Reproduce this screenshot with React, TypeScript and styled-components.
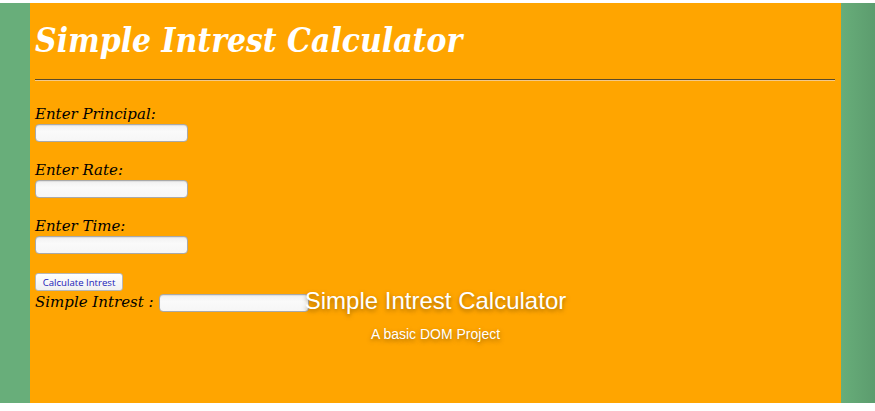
import React from "react";
import styled, { createGlobalStyle } from "styled-components";

const Global = createGlobalStyle`
  html, body { margin: 0; padding: 0; background: #ffffff; }
  body { padding-top: 3px; }
`;

const Page = styled.div`
  height: 400px;
  display: flex;
  padding: 0 34px 0 30px;
  background: linear-gradient(to right, #68ae7a 0%, #68ae7a 96%, #5c9c6e 100%);
`;

const Card = styled.main`
  flex: 1;
  background: #ffa500;
  padding: 0 6px 0 5px;
  display: flex;
  flex-direction: column;
`;

const Title = styled.h1`
  margin: 19px 0 0;
  font-family: "DejaVu Serif Condensed", "DejaVu Serif", serif;
  font-stretch: condensed;
  font-style: italic;
  font-weight: bold;
  font-size: 33.3px;
  line-height: 37px;
  color: #ffffff;
`;

const Rule = styled.hr`
  margin: 20px 0 0;
  border: 0;
  height: 2px;
  background: linear-gradient(to bottom, #5a4a2a 50%, #f3c98a 50%);
`;

const Form = styled.div`
  display: flex;
  flex-direction: column;
  margin-top: 24px;
`;

const Field = styled.div`
  display: flex;
  flex-direction: column;
  align-items: flex-start;
  margin-bottom: 19px;
`;

const Label = styled.label`
  font-family: "DejaVu Serif", serif;
  font-style: italic;
  font-size: 15px;
  line-height: 19px;
  color: #000000;
`;

const Input = styled.input<{ $w?: number }>`
  box-sizing: border-box;
  width: ${(p) => p.$w ?? 153}px;
  height: 18px;
  margin: 0;
  padding: 0 3px;
  border: 1px solid #a9a9a9;
  border-radius: 4px;
  background: linear-gradient(to bottom, #f1f1f1, #fafafa 40%, #f6f6f6);
  box-shadow: inset 0 1px 1px rgba(0, 0, 0, 0.08);
  outline: none;
`;

const Button = styled.button`
  box-sizing: border-box;
  align-self: flex-start;
  width: 88px;
  height: 18px;
  margin: 0;
  padding: 0;
  border: 1px solid #b8b8b8;
  border-radius: 3px;
  background: linear-gradient(to bottom, #ffffff, #f0f0f0);
  font-family: "Open Sans", "Noto Sans", sans-serif;
  font-size: 9.6px;
  color: #2020b8;
  cursor: pointer;
`;

const Stack = styled.div`
  display: grid;
  & > * { grid-area: 1 / 1; }
`;

const ResultRow = styled.div`
  display: flex;
  align-items: center;
  gap: 5px;
  align-self: start;
  margin-top: 2px;
`;

const Footer = styled.footer`
  display: flex;
  flex-direction: column;
  align-items: center;
  margin-top: -4px;
  margin-right: -1px;
  color: #ffffff;
  font-family: "Liberation Sans", Arial, sans-serif;
  text-shadow: 0 2px 4px rgba(90, 60, 0, 0.55);
`;

const FooterTitle = styled.h2`
  margin: 0;
  font-size: 24px;
  font-weight: normal;
  line-height: 28px;
`;

const FooterSub = styled.p`
  margin: 11px 0 0;
  font-size: 14px;
  line-height: 16px;
`;

export default function App() {
  return (
    <>
      <Global />
      <Page>
        <Card>
          <Title>Simple Intrest Calculator</Title>
          <Rule />
          <Form>
            <Field>
              <Label>Enter Principal:</Label>
              <Input />
            </Field>
            <Field>
              <Label>Enter Rate:</Label>
              <Input />
            </Field>
            <Field>
              <Label>Enter Time:</Label>
              <Input />
            </Field>
            <Button>Calculate Intrest</Button>
            <Stack>
              <ResultRow>
                <Label>Simple Intrest :</Label>
                <Input $w={150} readOnly />
              </ResultRow>
              <Footer>
                <FooterTitle>Simple Intrest Calculator</FooterTitle>
                <FooterSub>A basic DOM Project</FooterSub>
              </Footer>
            </Stack>
          </Form>
        </Card>
      </Page>
    </>
  );
}
